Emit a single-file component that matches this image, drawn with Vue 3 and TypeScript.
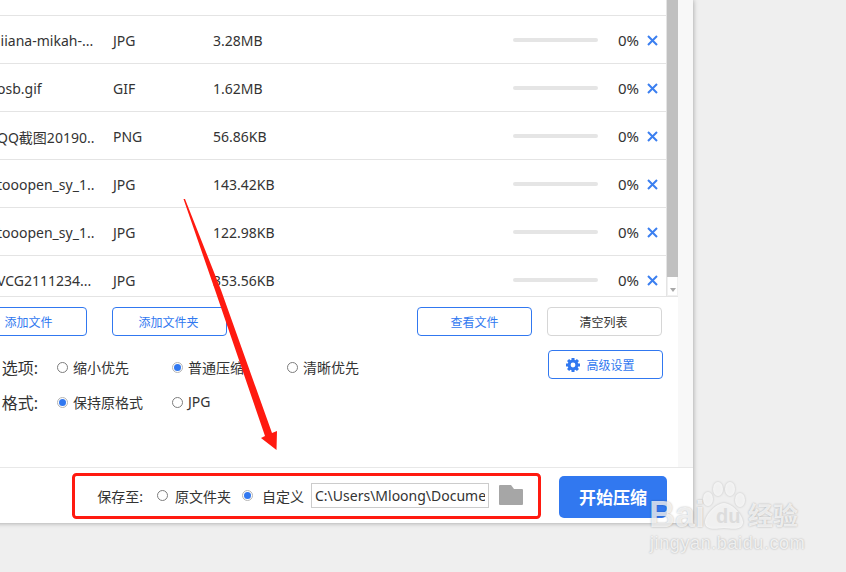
<script setup lang="ts">
interface FileRow { name: string; type: string; size: string }
const files: FileRow[] = [
  { name: 'iiiana-mikah-...', type: 'JPG', size: '3.28MB' },
  { name: 'osb.gif', type: 'GIF', size: '1.62MB' },
  { name: 'QQ截图20190...', type: 'PNG', size: '56.86KB' },
  { name: 'tooopen_sy_1...', type: 'JPG', size: '143.42KB' },
  { name: 'tooopen_sy_1...', type: 'JPG', size: '122.98KB' },
  { name: 'VCG2111234...', type: 'JPG', size: '353.56KB' },
]
const qualities = [
  { text: '缩小优先', on: false },
  { text: '普通压缩', on: true },
  { text: '清晰优先', on: false },
]
const formats = [
  { text: '保持原格式', on: true },
  { text: 'JPG', on: false },
]
const teeth = [0, 45, 90, 135, 180, 225, 270, 315]
</script>

<template>
  <div class="stage">
    <div class="window">
      <div class="body">
        <div class="main">
          <div class="list">
            <div class="rows">
              <div class="row-top"></div>
              <div v-for="(f, i) in files" :key="i" class="row">
                <span class="cell name">{{ f.name }}</span>
                <span class="cell">{{ f.type }}</span>
                <span class="cell">{{ f.size }}</span>
                <span class="bar"></span>
                <span class="pct">0%</span>
                <svg class="close" width="11" height="11" viewBox="0 0 11 11">
                  <path d="M1 1L10 10M10 1L1 10" stroke="#3b7ff0" stroke-width="2" fill="none" />
                </svg>
              </div>
            </div>
            <div class="scrollbar">
              <div class="thumb"></div>
              <div class="track"><span class="arrow"></span></div>
            </div>
          </div>
          <div class="tools">
            <div class="buttons">
              <button class="btn blue tight">添加文件</button>
              <button class="btn blue tight">添加文件夹</button>
              <button class="btn blue push">查看文件</button>
              <button class="btn grey tight">清空列表</button>
            </div>
            <div class="options">
              <div class="option-rows">
                <div class="opt-row">
                  <span class="opt-label">选项:</span>
                  <label v-for="q in qualities" :key="q.text" class="opt">
                    <span class="radio" :class="{ on: q.on }"></span>{{ q.text }}
                  </label>
                </div>
                <div class="opt-row">
                  <span class="opt-label">格式:</span>
                  <label v-for="q in formats" :key="q.text" class="opt">
                    <span class="radio" :class="{ on: q.on }"></span>{{ q.text }}
                  </label>
                </div>
              </div>
              <button class="btn blue advanced">
                <svg width="14" height="14" viewBox="0 0 14 14">
                  <rect
                    v-for="t in teeth"
                    :key="t"
                    x="5.5"
                    y="0"
                    width="3"
                    height="3"
                    fill="#3178f0"
                    :transform="`rotate(${t} 7 7)`"
                  />
                  <circle cx="7" cy="7" r="3.9" fill="none" stroke="#3178f0" stroke-width="3" />
                </svg>
                高级设置
              </button>
            </div>
          </div>
        </div>
        <div class="strip"></div>
      </div>
      <div class="footer">
        <span class="save-label">保存至:</span>
        <label class="foot-opt first"><span class="radio"></span>原文件夹</label>
        <label class="foot-opt second"><span class="radio on"></span>自定义</label>
        <input class="path" readonly value="C:\Users\Mloong\Documents\Compress" />
        <svg class="folder" width="24" height="20" viewBox="0 0 24 20">
          <path d="M0 1Q0 0 1 0H12L15 4H23Q24 4 24 5V19Q24 20 23 20H1Q0 20 0 19Z" fill="#a6a6a6" />
        </svg>
        <button class="start">开始压缩</button>
      </div>
    </div>

    <svg class="annotation" width="846" height="572" viewBox="0 0 846 572">
      <rect x="73.5" y="474.5" width="466" height="43" rx="3" fill="none" stroke="#ff1a10" stroke-width="3" />
      <path
        d="M183.5 199L185 199L221 290L272 433L277 431L276.500 450L261 438L265 436L215 290Z"
        fill="#ff1a10"
      />
    </svg>

    <div class="mark">
      <span class="mark-bai">Bai</span>
      <svg class="mark-paw" width="44" height="50" viewBox="0 0 44 50">
        <ellipse cx="6" cy="17" rx="5" ry="7" />
        <ellipse cx="16" cy="7" rx="5" ry="7" />
        <ellipse cx="28" cy="7" rx="5" ry="7" />
        <ellipse cx="38" cy="18" rx="5" ry="7" />
        <path d="M22 21C30 21 42 34 41 41C40 48 32 47 22 46C12 47 4 48 3 41C2 34 14 21 22 21Z" />
      </svg>
      <span class="mark-du">du</span>
      <span class="mark-jy">经验</span>
      <span class="mark-url">jingyan.baidu.com</span>
    </div>
  </div>
</template>

<style scoped>
.stage {
  position: relative;
  width: 846px;
  height: 572px;
  overflow: hidden;
  background: #efefef;
  font-family: "Noto Sans", "Noto Sans CJK SC", sans-serif;
  font-size: 14px;
  color: #333;
}
.window {
  width: 773px;
  height: 523px;
  margin-left: -80px;
  background: #fff;
  box-shadow: 0 0 5px rgba(0, 0, 0, 0.35);
}
.body {
  display: flex;
  height: 467px;
}
.main {
  width: 758px;
}
.strip {
  width: 15px;
  background: #f8f8f8;
}
.list {
  display: flex;
  height: 297px;
  border-bottom: 1px solid #e4e4e4;
  box-sizing: border-box;
}
.rows {
  width: 747px;
  overflow: hidden;
  border-right: 1px solid #e4e4e4;
  box-sizing: border-box;
}
.row-top {
  height: 16px;
  border-bottom: 1px solid #e4e4e4;
  box-sizing: border-box;
}
.row {
  display: grid;
  grid-template-columns: 116px 100px 300px 85px 49px 11px;
  align-items: center;
  height: 48px;
  padding-left: 77px;
  border-bottom: 1px solid #e4e4e4;
  box-sizing: border-box;
  white-space: nowrap;
}
.cell {
  padding-top: 2px;
}
.name {
  width: 97px;
  overflow: hidden;
}
.bar {
  height: 4px;
  border-radius: 2px;
  background: #e5e5e5;
}
.pct {
  padding-left: 20px;
  font-size: 15px;
}
.close {
  display: block;
  margin-top: 1px;
}
.scrollbar {
  width: 11px;
  display: flex;
  flex-direction: column;
}
.thumb {
  height: 277px;
  background: #c0c0c0;
}
.track {
  flex: 1;
  position: relative;
  border: 1px solid #f0f0f0;
  border-top: 0;
}
.arrow {
  position: absolute;
  left: 2px;
  bottom: 3px;
  border-left: 3px solid transparent;
  border-right: 3px solid transparent;
  border-top: 4px solid #a8a8a8;
}
.tools {
  padding: 10px 15px 0 52px;
}
.buttons {
  display: flex;
  gap: 25px;
  padding-right: 1px;
}
.btn {
  display: flex;
  align-items: center;
  justify-content: center;
  width: 115px;
  height: 29px;
  padding: 0;
  box-sizing: border-box;
  border-radius: 4px;
  background: #fff;
  font-family: inherit;
  font-size: 12px;
}
.tight {
  padding-right: 2px;
}
.blue {
  border: 1px solid #3178f0;
  color: #3178f0;
}
.grey {
  border: 1px solid #d6d6d6;
  color: #333;
  margin-left: -10px;
}
.push {
  margin-left: auto;
}
.options {
  display: flex;
  justify-content: space-between;
  margin-top: 14px;
  margin-left: -52px;
}
.opt-row {
  display: flex;
  align-items: center;
  height: 35px;
}
.opt-label {
  width: 118px;
  margin-right: 19px;
  padding-bottom: 2px;
  text-align: right;
  font-size: 16px;
  white-space: nowrap;
}
.opt {
  display: flex;
  align-items: center;
  width: 115px;
  padding-bottom: 2px;
  white-space: nowrap;
}
.radio {
  position: relative;
  flex: none;
  width: 11px;
  height: 11px;
  margin-right: 5px;
  border: 1px solid #7d7d7d;
  border-radius: 50%;
  box-sizing: border-box;
  background: #fff;
}
.opt .radio {
  margin-top: 2px;
}
.radio.on {
  border-color: #b5b5b5;
}
.radio.on::after {
  content: "";
  position: absolute;
  left: 1px;
  top: 1px;
  width: 7px;
  height: 7px;
  border-radius: 50%;
  background: #3178f0;
}
.advanced {
  gap: 6px;
  padding-right: 10px;
}
.footer {
  display: flex;
  align-items: center;
  justify-content: flex-end;
  height: 56px;
  padding-right: 26px;
  border-top: 1px solid #e8e8e8;
  box-sizing: border-box;
  white-space: nowrap;
}
.foot-opt {
  display: flex;
  align-items: center;
}
.foot-opt.first {
  margin-left: 14px;
}
.foot-opt.first .radio {
  margin-right: 7px;
}
.foot-opt.second {
  margin-left: 11px;
}
.foot-opt.second .radio {
  margin-right: 9px;
}
.path {
  width: 178px;
  height: 25px;
  margin-left: 7px;
  padding: 0 3px;
  box-sizing: border-box;
  border: 1px solid #ccc;
  border-radius: 0;
  outline: 0;
  font-family: inherit;
  font-size: 14px;
  color: #333;
}
.folder {
  margin-left: 10px;
  margin-top: -1px;
}
.start {
  width: 108px;
  height: 42px;
  margin-left: 36px;
  margin-top: 2px;
  padding: 0;
  border: 0;
  border-radius: 5px;
  background: #3178f0;
  color: #fff;
  font-family: inherit;
  font-size: 17px;
  font-weight: 700;
}
.annotation {
  position: absolute;
  left: 0;
  top: 0;
}
.mark {
  position: absolute;
  left: 0;
  top: 0;
  color: rgba(255, 255, 255, 0.75);
  text-shadow: 0 0 2px rgba(0, 0, 0, 0.3);
  font-family: "Liberation Sans", sans-serif;
  white-space: nowrap;
  line-height: 1;
}
.mark span {
  position: absolute;
}
.mark-bai {
  left: 649px;
  top: 497px;
  font-size: 36px;
  font-weight: 700;
}
.mark-paw {
  position: absolute;
  left: 702px;
  top: 482px;
  fill: rgba(255, 255, 255, 0.75);
  filter: drop-shadow(0 0 1px rgba(0, 0, 0, 0.25));
}
.mark-du {
  left: 716px;
  top: 506px;
  font-size: 20px;
  font-weight: 700;
  color: #dcdcdc;
  text-shadow: none;
}
.mark-jy {
  left: 748px;
  top: 502px;
  font-family: "Noto Sans CJK SC", sans-serif;
  font-size: 25px;
  font-weight: 700;
}
.mark-url {
  left: 650px;
  top: 534px;
  font-size: 18px;
  letter-spacing: 0.6px;
}
</style>
